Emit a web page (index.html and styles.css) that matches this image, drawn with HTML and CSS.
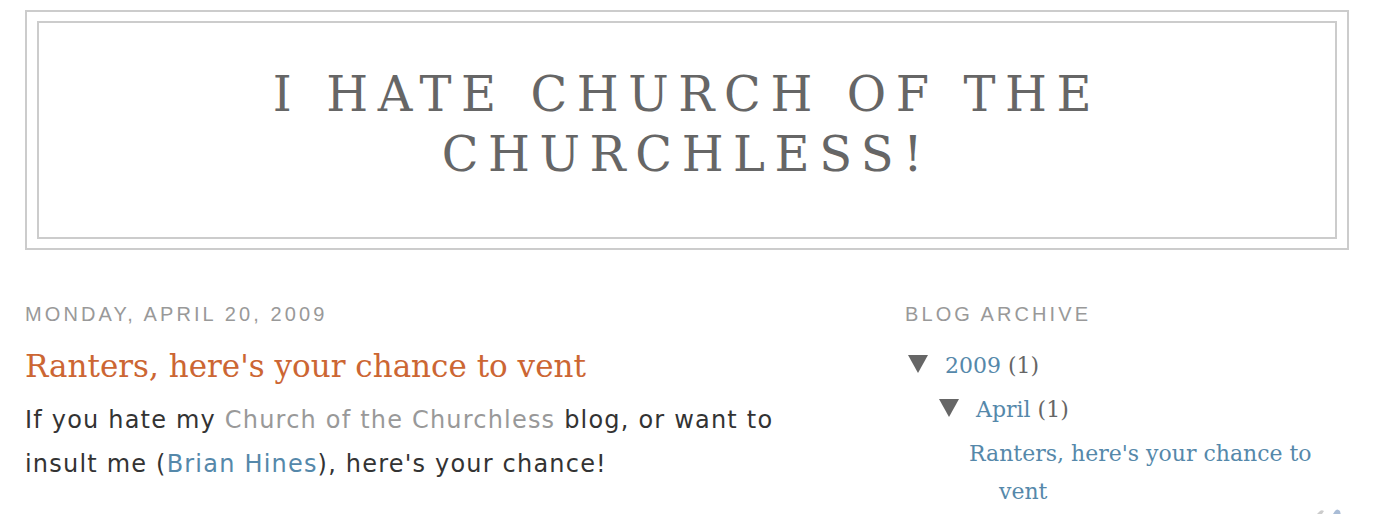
FILE: index.html
```html
<!DOCTYPE html>
<html>
<head>
<meta charset="utf-8">
<title>I hate Church of the Churchless!</title>
<link rel="stylesheet" href="styles.css">
</head>
<body>
<div class="outer">
  <div class="header-wrapper">
    <div class="header">
      <h1 class="blog-title">I hate Church of the Churchless!</h1>
    </div>
  </div>
  <div class="content">
    <div class="main">
      <h2 class="date-header">Monday, April 20, 2009</h2>
      <h3 class="post-title">Ranters, here's your chance to vent</h3>
      <div class="post-body">If you hate my <a class="link-grey" href="#">Church of the Churchless</a> blog, or want to insult me (<a class="link-blue" href="#">Brian Hines</a>), here's your chance!</div>
    </div>
    <div class="sidebar">
      <h2 class="date-header">Blog Archive</h2>
      <ul class="archive">
        <li class="year"><span class="toggle"><svg width="20" height="18" viewBox="0 0 20 18"><path d="M0 0H20L10 18Z" fill="#666"/></svg></span><a href="#">2009</a> <span class="count">(1)</span>
          <ul class="archive">
            <li class="month"><span class="toggle"><svg width="20" height="18" viewBox="0 0 20 18"><path d="M0 0H20L10 18Z" fill="#666"/></svg></span><a href="#">April</a> <span class="count">(1)</span>
              <ul class="posts">
                <li><a href="#">Ranters, here's your chance to vent</a></li>
              </ul>
            </li>
          </ul>
        </li>
      </ul>
      <div class="quickedit"><svg width="36" height="14" viewBox="0 0 36 14"><path d="M2 14 L10 6 Q12 3 15 5 L9 14Z" fill="#ccc"/><path d="M20 14 L26 5 Q28 2 31 5 L33 14Z" fill="#a9bcd6"/></svg></div>
    </div>
  </div>
</div>
</body>
</html>
```
FILE: styles.css
```css
html, body {
  margin: 0;
  padding: 0;
  background: #fff;
}
body {
  font-family: "DejaVu Serif", Georgia, serif;
  color: #333;
  overflow: hidden;
  height: 514px;
}
.outer {
  padding: 10px 33px 0 25px;
}
.header-wrapper {
  border: 2px solid #ccc;
}
.header {
  margin: 9px 10px 9px 10px;
  border: 2px solid #ccc;
  height: 214px;
  display: flex;
  align-items: center;
  justify-content: center;
}
.blog-title {
  margin: -12px 0 0 0;
  padding: 0 200px;
  font-family: "DejaVu Serif", Georgia, serif;
  font-weight: normal;
  font-size: 48px;
  line-height: 60px;
  letter-spacing: 0.2em;
  text-transform: uppercase;
  text-align: center;
  color: #666;
}
.content {
  display: flex;
  margin-top: 52px;
}
.main {
  width: 880px;
}
.sidebar {
  width: 440px;
  position: relative;
}
.date-header {
  margin: 0;
  font-family: "Liberation Sans", Arial, sans-serif;
  font-weight: normal;
  font-size: 20px;
  line-height: 24px;
  letter-spacing: 3.1px;
  text-transform: uppercase;
  color: #999;
}
.post-title {
  margin: 18px 0 0 0;
  font-family: "DejaVu Serif", Georgia, serif;
  font-weight: normal;
  font-size: 31px;
  line-height: 44px;
  color: #cc6633;
}
.post-body {
  margin-top: 10px;
  width: 790px;
  font-family: "DejaVu Sans", Verdana, sans-serif;
  font-size: 24px;
  letter-spacing: 1.2px;
  line-height: 44px;
  color: #333;
}
.link-grey {
  color: #999;
  text-decoration: none;
}
.link-blue {
  color: #5588aa;
  text-decoration: none;
}
.archive {
  list-style: none;
  margin: 0;
  padding: 0;
}
.sidebar > .archive {
  margin-top: 18px;
  padding-left: 3px;
}
.archive li {
  font-family: "DejaVu Serif", Georgia, serif;
  font-size: 22px;
  line-height: 44px;
  color: #666;
}
.archive .archive {
  padding-left: 31px;
}
.toggle {
  display: inline-block;
  width: 37px;
}
.toggle svg {
  display: inline-block;
  vertical-align: 0;
}
.archive a {
  color: #5588aa;
  text-decoration: none;
}
.posts {
  list-style: none;
  margin: 3px 0 0 0;
  padding: 0;
}
.posts li {
  padding-left: 30px;
  text-indent: -30px;
  margin-left: 30px;
  line-height: 38px;
  width: 355px;
}
.quickedit {
  position: absolute;
  right: 0;
  top: 203px;
}
```
